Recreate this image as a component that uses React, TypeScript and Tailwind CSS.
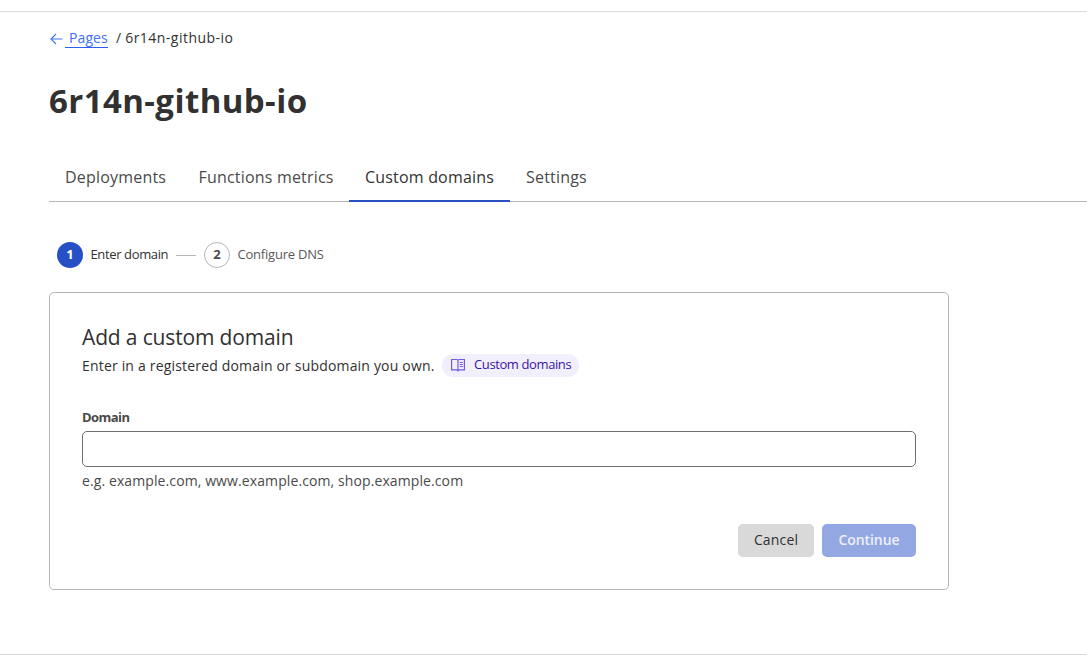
import React from "react";

const tabs = [
  { label: "Deployments", width: "w-[133.5px]", active: false },
  { label: "Functions metrics", width: "w-[166.5px]", active: false },
  { label: "Custom domains", width: "w-[161px]", active: true },
  { label: "Settings", width: "w-[94px]", active: false },
];

function ArrowLeft() {
  return (
    <svg width="14" height="14" viewBox="0 0 14 14" fill="none" stroke="#4370f5" strokeWidth="1.1" className="mt-0.5 shrink-0">
      <path d="M13.500 7H2M7 2L2 7l5 5" />
    </svg>
  );
}

function BookIcon() {
  return (
    <svg width="14" height="14" viewBox="0 0 14 14" fill="none" stroke="#7459df" className="shrink-0">
      <path d="M7 2.2V13.4M7 2.2C6.6 1.7 6.2 1.5 5.5 1.5H.6v10.3h4.9c.8 0 1.2.3 1.5.8.3-.5.7-.8 1.5-.8h4.9V1.5H8.5c-.7 0-1.1.2-1.5.7z" strokeWidth="1.2" />
      <path d="M8.7 4.5h3.200M8.700 6.500h3.200M8.700 8.500h3.200" strokeWidth="1.2" />
    </svg>
  );
}

export default function App() {
  return (
    <div className="flex h-[663px] flex-col overflow-hidden bg-white font-['Open_Sans','Noto_Sans',sans-serif] whitespace-nowrap text-[#313131]">
      <div className="h-3 shrink-0 border-b border-[#d9d9d9]" />
      <main className="flex h-[642px] shrink-0 flex-col pl-[49px]">
        <nav className="mt-4 flex h-5 items-center text-[14px] leading-5">
          <a className="flex items-center text-[#4370f5]" href="#pages">
            <ArrowLeft />
            <span className="ml-[2px] h-5 w-[43px] border-b border-[#2c5cf2] pl-1 tracking-[0.1px]">Pages</span>
          </a>
          <span className="ml-2">/</span>
          <span className="ml-[4px] tracking-[0.48px]">6r14n-github-io</span>
        </nav>
        <h1 className="mt-[32px] h-[42px] text-[33px] leading-[42px] font-bold tracking-[0.41px]">6r14n-github-io</h1>
        <div className="mt-[32px] flex h-12 shrink-0 border-b border-[#b6b6b6] text-[16px] leading-[46px] tracking-[0.19px]">
          {tabs.map((t) => (
            <a
              key={t.label}
              href="#tab"
              className={`${t.width} h-12 pl-4 ${t.active ? "border-b-2 border-[#2c50c4] text-[#313131]" : "text-[#4a4a4a]"}`}
            >
              {t.label}
            </a>
          ))}
        </div>
        <div className="mt-[40px] ml-2 flex h-[26px] items-center text-[13px]">
          <span className="flex size-[26px] items-center justify-center rounded-full bg-[#2750c5] font-bold text-white">1</span>
          <span className="ml-[7.5px] w-[78.5px] tracking-[-0.37px]">Enter domain</span>
          <span className="ml-[7px] h-px w-5 bg-[#b6b6b6]" />
          <span className="ml-2 flex size-[26px] items-center justify-center rounded-full border border-[#b6b6b6] font-bold text-[#4a4a4a]">2</span>
          <span className="ml-[7.5px] tracking-[-0.22px] text-[#595959]">Configure DNS</span>
        </div>
        <section className="mt-6 flex h-[298px] w-[900px] flex-col rounded-[5px] border border-[#b6b6b6] px-8 pt-[29px]">
          <h2 className="h-[31px] text-[21px] leading-[30px] tracking-[-0.15px]">Add a custom domain</h2>
          <div className="flex h-6 items-center text-[14px]">
            <span className="w-[360px] tracking-[0.18px]">Enter in a registered domain or subdomain you own.</span>
            <a href="#docs" className="flex h-[23px] w-[137px] items-center rounded-full bg-[#f2effd] pl-[9px] text-[13px] text-[#3914a8]">
              <BookIcon />
              <span className="ml-[9px] tracking-[-0.39px]">Custom domains</span>
            </a>
          </div>
          <label htmlFor="domain" className="mt-[30px] h-5 text-[13px] leading-5 font-bold tracking-[-0.55px] text-[#4a4a4a]">Domain</label>
          <input id="domain" className="mt-1 h-9 w-[834px] rounded-[5px] border border-[#6f6f6f] bg-white outline-none" />
          <p className="mt-1 h-5 text-[14px] leading-5 tracking-[0.1px] text-[#4a4a4a]">e.g. example.com, www.example.com, shop.example.com</p>
          <div className="mt-[33px] flex justify-end gap-2 text-[14px]">
            <button className="h-[33px] w-[76px] rounded-[5px] bg-[#d9d9d9] pb-[2px] tracking-[0.15px]">Cancel</button>
            <button className="h-[33px] w-[94px] rounded-[5px] bg-[#93a7e2] pb-[2px] font-semibold tracking-[-0.1px] text-[#edf0fa]">Continue</button>
          </div>
        </section>
      </main>
      <div className="h-[9px] shrink-0 border-t border-[#d9d9d9]" />
    </div>
  );
}
